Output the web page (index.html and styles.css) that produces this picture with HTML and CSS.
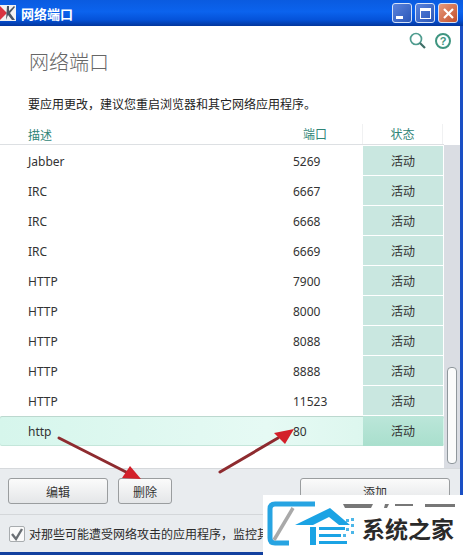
FILE: index.html
```html
<!DOCTYPE html>
<html>
<head>
<meta name="viewport" content="width=device-width, initial-scale=1">
<link rel="stylesheet" href="styles.css">
</head>
<body>

<div class="window">
  <div class="titlebar">
    <svg class="app-icon" width="16" height="16" viewBox="0 0 16 16">
      <rect width="16" height="16" fill="#f2f2f2"/>
      <path d="M0 1 L7 8 L0 15 Z" fill="#d8333f"/>
      <path d="M6 15 L7 1 L9 1 L9 6 L14 1 L15 2 L10 8 L15 15 L12 15 L8 10 Z" fill="#4a5563"/>
    </svg>
    <span class="title">网络端口</span>
    <div class="winbtns">
      <button class="winbtn"><i class="min"></i></button>
      <button class="winbtn"><i class="max"></i></button>
      <button class="winbtn close">
        <svg width="13" height="13" viewBox="0 0 13 13"><path d="M2 2 L11 11 M11 2 L2 11" stroke="#fff" stroke-width="2.2"/></svg>
      </button>
    </div>
  </div>

  <div class="content">
    <div class="tools">
      <svg width="20" height="20" viewBox="0 0 20 20"><circle cx="8" cy="8" r="5.5" fill="none" stroke="#4f9c8f" stroke-width="1.7"/><path d="M12 12 L17 17" stroke="#3f6f68" stroke-width="2.2"/></svg>
      <svg width="20" height="20" viewBox="0 0 20 20"><circle cx="12" cy="10" r="7" fill="none" stroke="#3f9580" stroke-width="2"/><text x="12" y="14" class="qmark" text-anchor="middle">?</text></svg>
    </div>
    <h1 class="heading">网络端口</h1>
    <p class="note">要应用更改，建议您重启浏览器和其它网络应用程序。</p>

    <div class="tablewrap">
      <div class="table">
        <div class="thead">
          <span>描述</span>
          <span class="th-port">端口</span>
          <span class="th-state">状态</span>
        </div>
        <div class="row"><span>Jabber</span><span>5269</span><span class="state">活动</span></div>
        <div class="row"><span>IRC</span><span>6667</span><span class="state">活动</span></div>
        <div class="row"><span>IRC</span><span>6668</span><span class="state">活动</span></div>
        <div class="row"><span>IRC</span><span>6669</span><span class="state">活动</span></div>
        <div class="row"><span>HTTP</span><span>7900</span><span class="state">活动</span></div>
        <div class="row"><span>HTTP</span><span>8000</span><span class="state">活动</span></div>
        <div class="row"><span>HTTP</span><span>8088</span><span class="state">活动</span></div>
        <div class="row"><span>HTTP</span><span>8888</span><span class="state">活动</span></div>
        <div class="row"><span>HTTP</span><span>11523</span><span class="state">活动</span></div>
        <div class="row selected"><span>http</span><span>80</span><span class="state">活动</span></div>
      </div>
      <div class="scrollbar"><div class="thumb"></div></div>
    </div>

    <div class="footer">
      <div class="actions">
        <button class="btn btn-edit">编辑</button>
        <button class="btn btn-del">删除</button>
        <button class="btn btn-add">添加</button>
      </div>
      <label class="check">
        <span class="box">
          <svg width="14" height="14" viewBox="0 0 14 14"><path d="M2 7 L6 12 L12 2" fill="none" stroke="#6a6f74" stroke-width="2.4"/></svg>
        </span>
        <span>对那些可能遭受网络攻击的应用程序，监控其所有端口</span>
      </label>
    </div>
  </div>
</div>

<!-- red arrows drawn over the screenshot -->
<svg class="arrows" width="463" height="555" viewBox="0 0 463 555">
  <path d="M59 438 L128 473" stroke="#8e2b2f" stroke-width="3" stroke-linecap="round"/>
  <path d="M141 479 L122 478 L130 466 Z" fill="#d3202a"/>
  <path d="M220 472 L278 438" stroke="#8e2b2f" stroke-width="3" stroke-linecap="round"/>
  <path d="M294 429 L285 444 L274 433 Z" fill="#d3202a"/>
</svg>

<div class="watermark">
  <svg class="wm-logo" width="98" height="60" viewBox="0 0 98 60">
    <path d="M52 9 H12 Q7 9 7 14 V43 Q7 48 12 48 H26" fill="none" stroke="#27a4e2" stroke-width="5"/>
    <path d="M11 45 L30 13" stroke="#a9a9a9" stroke-width="3.5"/>
    <path d="M32 30 L67 13 L87 30 L76 30 L66 22 L50 30 Z" fill="#1ba3e4"/>
    <path d="M47 32 H53 V50 H47 Z M56 32 H82 V35 H56 Z M56 39 H78 V42 H56 Z M56 46 H84 V49 H56 Z" fill="#1ba3e4"/>
    <path d="M83 24 h3 v3 h-3z M88 23 h3 v3 h-3z M88 29 h3 v3 h-3z M83 33 h3 v3 h-3z M88 36 h3 v3 h-3z M80 39 h3 v3 h-3z" fill="#4cb6e8"/>
  </svg>
  <span class="wm-text">系统之家</span>
  <!-- bits of the cut-off lettering along the top -->
  <svg class="wm-cut" width="112" height="6" viewBox="0 0 112 6">
    <path d="M0 1 H30 L28 5 H2 Z M42 1 H46 L44 5 H41 Z M52 1 H70 V3 H52 Z M82 1 H112 V4 H82 Z" fill="#777"/>
  </svg>
</div>

</body>
</html>
```

FILE: styles.css
```css
* {
  box-sizing: border-box;
}

html, body {
  margin: 0;
  height: 555px;
  overflow: hidden;
}

body {
  position: relative;
  font-family: "Noto Sans", "Noto Sans CJK SC", sans-serif;
  font-size: 12px;
  color: #2b2b2b;
  background: #fff;
}

.window {
  height: 555px;
  display: flex;
  flex-direction: column;
  border-right: 3px solid #1a4fc4;
  border-bottom: 3px solid #12409f;
}

/* title bar */
.titlebar {
  height: 26px;
  margin-right: -3px;
  display: flex;
  align-items: center;
  background: linear-gradient(#0a5be0 0%, #0b63ee 45%, #0553da 75%, #03369c 100%);
}

.title {
  margin-left: 5px;
  font-family: "Noto Sans CJK SC", sans-serif;
  font-weight: 700;
  font-size: 13px;
  color: #fff;
}

.winbtns {
  margin-left: auto;
  margin-right: 5px;
  display: flex;
  gap: 3px;
}

.winbtn {
  width: 20px;
  height: 20px;
  padding: 0;
  display: flex;
  align-items: center;
  justify-content: center;
  border: 1px solid #d5e2f8;
  border-radius: 3px;
  background: linear-gradient(135deg, #5b83dc, #2a57b8);
}

.winbtn.close {
  background: linear-gradient(135deg, #e89a7c, #c24f2c);
}

.min {
  display: block;
  width: 7px;
  height: 3px;
  margin: 9px 6px 0 0;
  background: #fff;
}

.max {
  display: block;
  width: 11px;
  height: 11px;
  border: 1px solid #fff;
  border-top-width: 3px;
}

/* main part */
.content {
  flex: 1;
  display: flex;
  flex-direction: column;
  min-height: 0;
}

.tools {
  height: 24px;
  padding: 5px 9px 0 0;
  display: flex;
  justify-content: flex-end;
  gap: 3px;
}

.qmark {
  font-family: "Liberation Sans", sans-serif;
  font-size: 11px;
  font-weight: 700;
  fill: #3f9580;
}

.heading {
  margin: -3px 0 0 29px;
  font-family: "Noto Sans CJK SC", sans-serif;
  font-weight: 300;
  font-size: 20px;
  line-height: 29px;
  color: #666;
}

.note {
  margin: 20px 0 0 28px;
  font-family: "Noto Sans CJK SC", sans-serif;
  line-height: 16px;
  color: #222;
}

/* table with scrollbar */
.tablewrap {
  margin-top: 12px;
  height: 344px;
  display: flex;
}

.table {
  width: 444px;
}

.thead {
  height: 21px;
  padding-left: 28px;
  display: grid;
  grid-template-columns: 275px 60px 80px;
  align-items: center;
  color: #2f8577;
  font-family: "Noto Sans CJK SC", sans-serif;
  border-bottom: 1px solid #dde0e3;
}

.th-port,
.th-state {
  height: 20px;
  line-height: 20px;
  border-right: 1px solid #f0f1f2;
}

.th-state {
  text-align: center;
}

.row {
  height: 30px;
  padding-left: 28px;
  display: grid;
  grid-template-columns: 265px 70px 80px;
  align-items: center;
  color: #333;
}

.thead + .row {
  margin-top: 1px;
}

.state {
  height: 29px;
  margin-bottom: 1px;
  line-height: 29px;
  text-align: center;
  font-family: "Noto Sans CJK SC", sans-serif;
  background: #c9e7e0;
}

.row.selected {
  border-radius: 2px;
  background: linear-gradient(90deg, #d6f6ec, #e6faf4 60%, #d6f4ea);
  box-shadow: inset 0 1px 0 #bcd8cf, inset 0 -1px 0 #c4e6da;
}

.selected .state {
  height: 30px;
  margin: 0;
  line-height: 30px;
  background: linear-gradient(#bbe6d9, #a9dfcd);
}

.scrollbar {
  width: 16px;
  margin-top: 21px;
  padding-top: 222px;
  padding-left: 3px;
  background: #dadde3;
}

.thumb {
  width: 10px;
  height: 97px;
  border: 1px solid #8f979c;
  border-radius: 4px;
  background: #fafbfb;
}

/* bottom part */
.footer {
  flex: 1;
  background: #e9ecef;
  border-top: 1px solid #d6d9dc;
}

.actions {
  padding: 9px 10px 10px 8px;
  display: flex;
  border-bottom: 1px solid #d4d7da;
}

.btn {
  height: 26px;
  padding: 0;
  font-family: "Noto Sans CJK SC", sans-serif;
  font-size: 12px;
  color: #333;
  border: 1px solid #9a9d9f;
  border-radius: 3px;
  background: linear-gradient(#fbfbfb, #e4e6e8);
}

.btn-edit {
  width: 100px;
}

.btn-del {
  width: 54px;
  margin-left: 10px;
}

.btn-add {
  width: 150px;
  margin-left: auto;
}

.check {
  padding: 10px 0 0 9px;
  display: flex;
  align-items: center;
  gap: 4px;
  font-family: "Noto Sans CJK SC", sans-serif;
  font-size: 12px;
  white-space: nowrap;
}

.box {
  width: 16px;
  height: 16px;
  display: flex;
  align-items: center;
  justify-content: center;
  border: 1px solid #a8acaf;
  border-radius: 2px;
  background: #fafafa;
}

/* overlays */
.arrows {
  position: absolute;
  left: 0;
  top: 0;
}

.watermark {
  position: absolute;
  left: 263px;
  top: 495px;
  width: 200px;
  height: 60px;
  display: flex;
  align-items: center;
  background: #fff;
}

.wm-cut {
  position: absolute;
  left: 80px;
  top: 8px;
}

.wm-text {
  margin-left: 1px;
  margin-top: 6px;
  font-family: "Noto Sans CJK SC", sans-serif;
  font-size: 23px;
  font-weight: 700;
  color: #2a2a2a;
}
```
